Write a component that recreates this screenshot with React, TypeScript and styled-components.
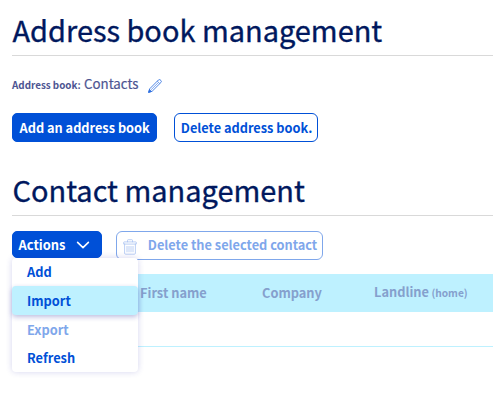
import React from "react";
import styled, { createGlobalStyle } from "styled-components";

const GlobalStyle = createGlobalStyle`
  * { box-sizing: border-box; }
  body {
    margin: 0;
    background: #fff;
    overflow: hidden;
    font-family: "Noto Sans CJK SC", "Noto Sans", sans-serif;
  }
`;

const Page = styled.main`
  height: 412px;
  padding: 9px 0 0 12px;
`;

const Heading = styled.h1`
  margin: 0;
  height: 47px;
  border-bottom: 1px solid #d9d9d9;
  font-size: 28.95px;
  line-height: 41px;
  font-weight: 400;
  color: #00185e;
  -webkit-text-stroke: 0.35px #00185e;
  text-indent: 0.5px;
  white-space: nowrap;
`;

const CurrentBook = styled.div`
  display: flex;
  align-items: baseline;
  height: 20px;
  margin-top: 18px;
  line-height: 20px;
  color: #4d5592;
  font-size: 13.3px;
  white-space: nowrap;
`;

const BookLabel = styled.span`
  width: 72px;
  font-size: 9.85px;
  font-weight: 700;
`;

const BookName = styled.span`
  width: 64px;
  -webkit-text-stroke: 0.2px #4d5592;
`;

const PencilIcon = styled.svg`
  align-self: center;
  margin-top: 4px;
  width: 14px;
  height: 14px;
`;

const Buttons = styled.div<{ $gap: number }>`
  display: flex;
  gap: ${(p) => p.$gap}px;
`;

const Button = styled.button<{ $width: number }>`
  display: flex;
  align-items: center;
  width: ${(p) => p.$width}px;
  height: 29px;
  padding: 0 0 0 5.8px;
  border: 1px solid #0050d7;
  border-radius: 6px;
  background: #fff;
  color: #0050d7;
  font-family: inherit;
  font-size: 12.75px;
  line-height: 27px;
  font-weight: 700;
  white-space: nowrap;

  &:disabled {
    border-color: #7fa7eb;
    color: #7fa7eb;
  }
`;

const PrimaryButton = styled(Button)`
  padding-left: 6.5px;
  border-radius: 5px;
  background: #0050d7;
  color: #fff;
`;

const BookActions = styled(Buttons)`
  margin: 19px 0 27px;
`;

const ContactActions = styled(Buttons)`
  margin-top: 15px;
`;

const MenuAnchor = styled.div`
  position: relative;
  height: 27px;
`;

const MenuButton = styled(PrimaryButton)`
  height: 27px;
  padding-left: 5.5px;
  line-height: 25px;
  font-size: 12.9px;
`;

const Chevron = styled.svg`
  width: 14px;
  height: 10px;
  margin-left: 10.5px;
`;

const TrashIcon = styled.svg`
  width: 14px;
  height: 16px;
  margin: 3px 11px 0 0;
`;

const TrashButton = styled(Button)`
  line-height: 26px;
  padding-bottom: 1px;
`;

const Menu = styled.ul`
  position: absolute;
  z-index: 1;
  top: 27px;
  left: 0;
  width: 126px;
  height: 114px;
  margin: 0;
  padding: 0;
  list-style: none;
  border-radius: 4px;
  background: #fff;
  box-shadow: 0 0 6px rgba(40, 40, 170, 0.2);
`;

const MenuItem = styled.li<{ $active?: boolean; $disabled?: boolean; $drop?: number }>`
  height: ${(p) => (p.$active ? 29 : 28)}px;
  padding-left: 15px;
  border-radius: 4px;
  font-size: 12.8px;
  line-height: ${(p) => (p.$active ? 29 : 28 + (p.$drop ?? 0))}px;
  font-weight: 700;
  color: ${(p) => (p.$disabled ? "#7fa7eb" : "#0050d7")};
  background: ${(p) => (p.$active ? "#bef1ff" : "transparent")};
  box-shadow: ${(p) => (p.$active ? "0 2px 5px rgba(40, 40, 150, 0.3)" : "none")};
`;

const Table = styled.section`
  margin-top: 14px;
`;

const TableHead = styled.div`
  display: grid;
  grid-template-columns: 128px 122px 112px 1fr;
  height: 38px;
  background: #bef1ff;
  color: #85a0cd;
  font-size: 12.8px;
  line-height: 38px;
  font-weight: 700;
  white-space: nowrap;
`;

const LandlineHead = styled.span`
  line-height: 36px;
`;

const Kind = styled.small`
  margin-left: -0.5px;
  font-size: 10.2px;
`;

const EmptyRow = styled.div`
  height: 35px;
  border-bottom: 1px solid #bef1ff;
`;

export default function App() {
  return (
    <>
      <GlobalStyle />
      <Page>
        <Heading>Address book management</Heading>
        <CurrentBook>
          <BookLabel>Address book:</BookLabel>
          <BookName>Contacts</BookName>
          <PencilIcon viewBox="0 0 14 14" fill="none" stroke="#2d6fe0" strokeWidth="0.85" strokeLinejoin="round">
            <path d="M0.6 13.4 1.7 9.8 10.4 1Q11.2 .2 12.1 .8L13 1.6Q13.8 2.5 13 3.4L4.2 12.2Z" />
            <path d="M9.2 2.2 11.8 4.6M3 10.9 10.3 3.6" strokeWidth="0.6" />
            <path d="M.6 13.4 1.5 10.6 3.4 12.5Z" fill="#2d6fe0" />
          </PencilIcon>
        </CurrentBook>
        <BookActions $gap={17}>
          <PrimaryButton $width={145}>Add an address book</PrimaryButton>
          <Button $width={144}>Delete address book.</Button>
        </BookActions>

        <Heading>Contact management</Heading>
        <ContactActions $gap={14}>
          <MenuAnchor>
            <MenuButton $width={90}>
              Actions
              <Chevron viewBox="0 0 14 10" fill="none" stroke="#fff" strokeWidth="1.6" strokeLinecap="round" strokeLinejoin="round">
                <path d="M1.6 2.4 7 7.6 12.4 2.4" />
              </Chevron>
            </MenuButton>
            <Menu>
              <MenuItem>Add</MenuItem>
              <MenuItem $active>Import</MenuItem>
              <MenuItem $disabled $drop={2}>Export</MenuItem>
              <MenuItem $drop={2}>Refresh</MenuItem>
            </Menu>
          </MenuAnchor>
          <TrashButton $width={207} disabled>
            <TrashIcon viewBox="0 0 14 16" fill="none" stroke="#a9c3f1" strokeWidth="0.8" strokeLinecap="round" strokeLinejoin="round">
              <path d="M.7 4.7V3.4Q.7 2.9 1.2 2.9H12.8Q13.3 2.9 13.3 3.4V4.7ZM4.5 2.8V1.4Q4.5.7 5.2.7H8.8Q9.5.7 9.5 1.4V2.8" />
              <path d="M1.6 5V14.2Q1.6 15.2 2.6 15.2H11.4Q12.4 15.2 12.4 14.2V5M4 7.4V12.8M6 7.4V12.8M8 7.4V12.8M10 7.4V12.8" />
            </TrashIcon>
            Delete the selected contact
          </TrashButton>
        </ContactActions>

        <Table>
          <TableHead>
            <span />
            <span>First name</span>
            <span>Company</span>
            <LandlineHead>
              Landline <Kind>(home)</Kind>
            </LandlineHead>
          </TableHead>
          <EmptyRow />
        </Table>
      </Page>
    </>
  );
}
